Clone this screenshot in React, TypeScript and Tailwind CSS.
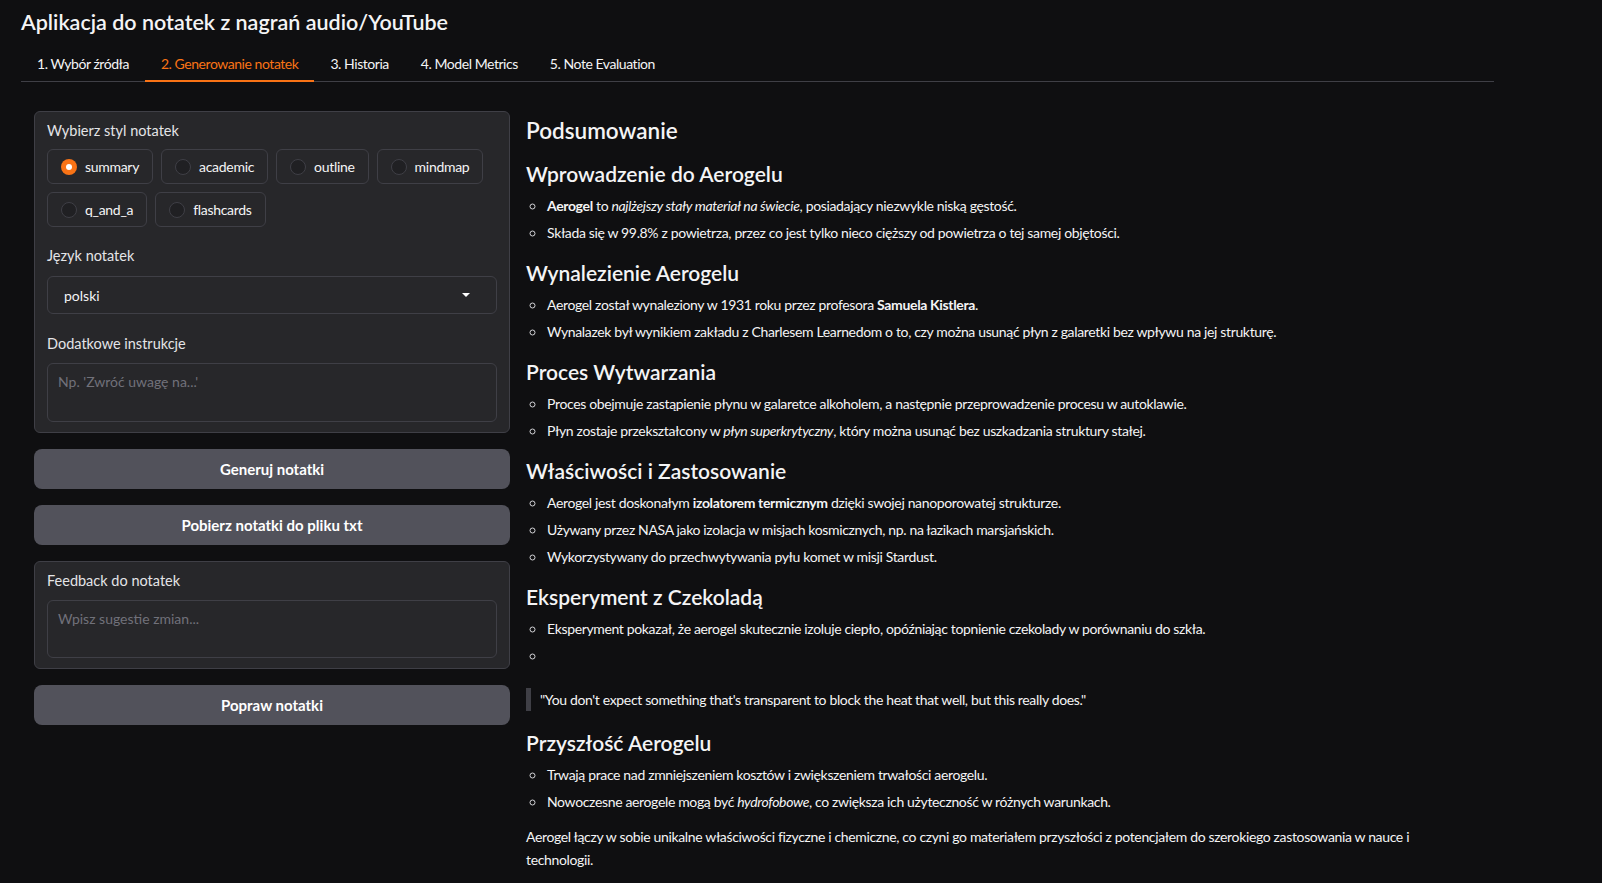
import { useState } from "react";

const STYLES = [
  ["summary", "academic", "outline", "mindmap"],
  ["q_and_a", "flashcards"],
];

const TABS = [
  "1. Wybór źródła",
  "2. Generowanie notatek",
  "3. Historia",
  "4. Model Metrics",
  "5. Note Evaluation",
];

function Radio({ label, checked, onClick }: { label: string; checked: boolean; onClick: () => void }) {
  return (
    <button
      onClick={onClick}
      className="flex h-[35px] items-center gap-2 rounded-md border border-[#3f3f46] bg-[#27272a] pl-[13px] pr-[13px] text-[14px] tracking-[-0.3px] text-[#f4f4f5]"
    >
      {checked ? (
        <span className="flex h-4 w-4 items-center justify-center rounded-full bg-[#f97316]">
          <span className="h-[6px] w-[6px] rounded-full bg-white" />
        </span>
      ) : (
        <span className="h-4 w-4 rounded-full border border-[#3f3f46] bg-[#202023]" />
      )}
      {label}
    </button>
  );
}

function Label({ children }: { children: React.ReactNode }) {
  return <p className="text-[14.5px] leading-5 text-[#e4e4e7]">{children}</p>;
}

function Section({ title, items }: { title: string; items: React.ReactNode[] }) {
  return (
    <>
      <h3 className="mt-[13px] text-[21px] font-semibold leading-[28px] tracking-normal text-[#f4f4f5]">{title}</h3>
      <ul className="mt-[4px] list-[circle] pl-[20px] leading-[27px] marker:text-[#d4d4d8]">
        {items.map((it, i) => (
          <li key={i} className="pl-[1px]">
            {it || "\u00a0"}
          </li>
        ))}
      </ul>
    </>
  );
}

export default function App() {
  const [style, setStyle] = useState("summary");
  const [tab, setTab] = useState(1);

  return (
    <div className="min-h-screen bg-[#0f0f11] font-['Lato','Liberation_Sans',sans-serif] text-[#f4f4f5]">
      <div className="ml-[21px] w-[1473px] pt-[8px]">
        <h1 className="text-[21.5px] font-semibold leading-[28px]">Aplikacja do notatek z nagrań audio/YouTube</h1>

        {/* zakładki */}
        <div className="mt-[10px] flex border-b border-[#3f3f46]">
          {TABS.map((t, i) => (
            <button
              key={t}
              onClick={() => setTab(i)}
              className={
                i === tab
                  ? "-mb-px h-[36px] border-b-2 border-[#f97316] px-4 text-[14px] tracking-[-0.45px] text-[#f97316]"
                  : "-mb-px h-[36px] border-b-2 border-transparent px-4 text-[14px] tracking-[-0.45px] text-[#f4f4f5]"
              }
            >
              {t}
            </button>
          ))}
        </div>

        <div className="mt-[29px] flex gap-4 px-[13px]">
          {/* LEWA KOLUMNA */}
          <div className="flex w-[476px] shrink-0 flex-col gap-4">
            <div className="rounded-md border border-[#3f3f46] bg-[#27272a] px-3 pt-[9px] pb-[10px]">
              <Label>Wybierz styl notatek</Label>
              <div className="mt-2 flex flex-col gap-2">
                {STYLES.map((row, r) => (
                  <div key={r} className="flex gap-2">
                    {row.map((s) => (
                      <Radio key={s} label={s} checked={style === s} onClick={() => setStyle(s)} />
                    ))}
                  </div>
                ))}
              </div>

              <div className="mt-[19px]">
                <Label>Język notatek</Label>
                <div className="mt-[10px] flex h-[38px] items-center justify-between rounded-md border border-[#3f3f46] bg-[#27272a] pl-4 pr-[26px] text-[14px] text-[#f4f4f5]">
                  <span>polski</span>
                  <span className="h-0 w-0 border-x-4 border-t-4 border-x-transparent border-t-white" />
                </div>
              </div>

              <div className="mt-[20px]">
                <Label>Dodatkowe instrukcje</Label>
                <textarea
                  placeholder="Np. 'Zwróć uwagę na...'"
                  className="mt-[9px] block h-[59px] w-full resize-none rounded-md border border-[#3f3f46] bg-[#27272a] px-[10px] py-[7px] text-[14px] text-[#f4f4f5] outline-none placeholder:text-[#71717a]"
                />
              </div>
            </div>

            <button className="h-[40px] rounded-lg bg-[#52525b] text-[15px] font-bold text-white">Generuj notatki</button>
            <button className="h-[40px] rounded-lg bg-[#52525b] text-[15px] font-bold text-white">
              Pobierz notatki do pliku txt
            </button>

            <div className="rounded-md border border-[#3f3f46] bg-[#27272a] px-3 pt-[9px] pb-[10px]">
              <Label>Feedback do notatek</Label>
              <textarea
                placeholder="Wpisz sugestie zmian..."
                className="mt-[9px] block h-[58px] w-full resize-none rounded-md border border-[#3f3f46] bg-[#27272a] px-[10px] py-[7px] text-[14px] text-[#f4f4f5] outline-none placeholder:text-[#71717a]"
              />
            </div>

            <button className="h-[40px] rounded-lg bg-[#52525b] text-[15px] font-bold text-white">Popraw notatki</button>
          </div>

          {/* PRAWA KOLUMNA — notatki */}
          <div className="min-w-0 flex-1 pt-[4px] text-[14px] tracking-[-0.35px]">
            <h2 className="text-[22.5px] font-semibold leading-[32px] tracking-normal">Podsumowanie</h2>
            <div className="mt-[4px]" />
            <Section
              title="Wprowadzenie do Aerogelu"
              items={[
                <>
                  <b>Aerogel</b> to <i>najlżejszy stały materiał na świecie</i>, posiadający niezwykle niską gęstość.
                </>,
                "Składa się w 99.8% z powietrza, przez co jest tylko nieco cięższy od powietrza o tej samej objętości.",
              ]}
            />
            <Section
              title="Wynalezienie Aerogelu"
              items={[
                <>
                  Aerogel został wynaleziony w 1931 roku przez profesora <b>Samuela Kistlera</b>.
                </>,
                "Wynalazek był wynikiem zakładu z Charlesem Learnedom o to, czy można usunąć płyn z galaretki bez wpływu na jej strukturę.",
              ]}
            />
            <Section
              title="Proces Wytwarzania"
              items={[
                "Proces obejmuje zastąpienie płynu w galaretce alkoholem, a następnie przeprowadzenie procesu w autoklawie.",
                <>
                  Płyn zostaje przekształcony w <i>płyn superkrytyczny</i>, który można usunąć bez uszkadzania struktury stałej.
                </>,
              ]}
            />
            <Section
              title="Właściwości i Zastosowanie"
              items={[
                <>
                  Aerogel jest doskonałym <b>izolatorem termicznym</b> dzięki swojej nanoporowatej strukturze.
                </>,
                "Używany przez NASA jako izolacja w misjach kosmicznych, np. na łazikach marsjańskich.",
                "Wykorzystywany do przechwytywania pyłu komet w misji Stardust.",
              ]}
            />
            <Section
              title="Eksperyment z Czekoladą"
              items={[
                "Eksperyment pokazał, że aerogel skutecznie izoluje ciepło, opóźniając topnienie czekolady w porównaniu do szkła.",
                "",
              ]}
            />
            <blockquote className="mt-[19px] border-l-[5px] border-[#3f3f46] pl-[9px] leading-[23px]">
              "You don't expect something that's transparent to block the heat that well, but this really does."
            </blockquote>
            <h3 className="mt-[18px] text-[21px] font-semibold leading-[28px] tracking-normal">Przyszłość Aerogelu</h3>
            <ul className="mt-[4px] list-[circle] pl-[20px] leading-[27px] marker:text-[#d4d4d8]">
              <li className="pl-[1px]">Trwają prace nad zmniejszeniem kosztów i zwiększeniem trwałości aerogelu.</li>
              <li className="pl-[1px]">
                Nowoczesne aerogele mogą być <i>hydrofobowe</i>, co zwiększa ich użyteczność w różnych warunkach.
              </li>
            </ul>
            <p className="mt-[10px] leading-[23px]">
              Aerogel łączy w sobie unikalne właściwości fizyczne i chemiczne, co czyni go materiałem przyszłości z potencjałem do
              szerokiego zastosowania w nauce i
              <br />
              technologii.
            </p>
          </div>
        </div>
      </div>
    </div>
  );
}
